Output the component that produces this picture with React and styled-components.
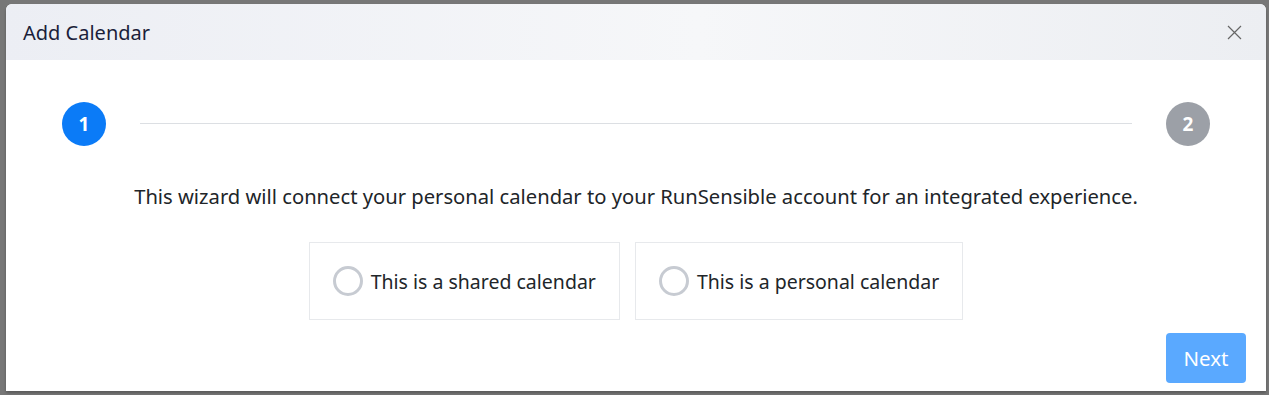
import React from "react";
import styled, { createGlobalStyle } from "styled-components";

const Global = createGlobalStyle`
  html, body { margin: 0; padding: 0; }
  body {
    width: 1269px;
    height: 395px;
    overflow: hidden;
    background: #7a7a7a;
    font-family: "Noto Sans", "Open Sans", sans-serif;
  }
`;

const Backdrop = styled.div`
  width: 1269px;
  height: 395px;
  background: #777777;
  overflow: hidden;
  padding: 4px 3px 0 6px;
  box-sizing: border-box;
`;

const Modal = styled.div`
  width: 1260px;
  height: 387px;
  background: #ffffff;
  border-radius: 6px 6px 0 0;
  overflow: hidden;
  display: flex;
  flex-direction: column;
  box-shadow: 0 2px 3px rgba(0, 0, 0, 0.25);
`;

const Header = styled.div`
  height: 56px;
  flex: none;
  display: flex;
  align-items: center;
  justify-content: space-between;
  padding: 0 24px 0 17px;
  background: linear-gradient(90deg, #eceef4 0%, #f6f7f9 55%, #eceef2 100%);
`;

const Title = styled.h5`
  margin: 0;
  font-size: 20px;
  font-weight: 400;
  color: #1b1e3a;
`;

const Close = styled.button`
  border: none;
  background: none;
  padding: 0;
  width: 16px;
  height: 16px;
  display: flex;
  align-items: center;
  justify-content: center;
  cursor: pointer;
`;

const Body = styled.div`
  flex: 1;
  display: flex;
  flex-direction: column;
  padding: 42px 20px 0 20px;
`;

const Stepper = styled.div`
  display: flex;
  align-items: center;
  margin: 0 36px;
`;

const StepDot = styled.div`
  width: 44px;
  height: 44px;
  border-radius: 50%;
  flex: none;
  background: ${(p) => (p.$active ? "#0b7bf7" : "#9ca0a7")};
  color: #fff;
  font-weight: 700;
  font-size: 19px;
  display: flex;
  align-items: center;
  justify-content: center;
`;

const StepLine = styled.div`
  flex: 1;
  height: 1px;
  background: #dcdfe3;
  margin: 0 34px 1px 34px;
`;

const Intro = styled.p`
  margin: 37px 0 0 0;
  text-align: center;
  font-size: 20.2px;
  line-height: 27px;
  color: #212529;
`;

const Options = styled.div`
  margin-top: 32px;
  display: flex;
  justify-content: center;
  gap: 15px;
`;

const Option = styled.label`
  height: 78px;
  box-sizing: border-box;
  border: 1px solid #e7e9ec;
  display: flex;
  align-items: center;
  gap: 8px;
  padding: 0 23px;
  font-size: 19.5px;
  color: #212529;
  cursor: pointer;
`;

const Radio = styled.span`
  width: 30px;
  height: 30px;
  box-sizing: border-box;
  border-radius: 50%;
  border: 3px solid #c7cbd2;
  background: #fff;
  flex: none;
`;

const Footer = styled.div`
  display: flex;
  justify-content: flex-end;
  margin-top: 13px;
`;

const NextButton = styled.button`
  width: 80px;
  height: 50px;
  border: none;
  border-radius: 4px;
  background: #5aa9ff;
  color: #fff;
  font-family: inherit;
  font-size: 20.5px;
  cursor: default;
`;

export default function App() {
  return (
    <>
      <Global />
      <Backdrop>
        <Modal>
          <Header>
            <Title>Add Calendar</Title>
            <Close aria-label="Close">
              <svg width="15" height="15" viewBox="0 0 15 15">
                <path d="M1 1 L14 14 M14 1 L1 14" stroke="#666" strokeWidth="1.2" fill="none" />
              </svg>
            </Close>
          </Header>
          <Body>
            <Stepper>
              <StepDot $active>1</StepDot>
              <StepLine />
              <StepDot>2</StepDot>
            </Stepper>
            <Intro>
              This wizard will connect your personal calendar to your RunSensible account for an integrated experience.
            </Intro>
            <Options>
              <Option>
                <Radio />
                This is a shared calendar
              </Option>
              <Option>
                <Radio />
                This is a personal calendar
              </Option>
            </Options>
            <Footer>
              <NextButton>Next</NextButton>
            </Footer>
          </Body>
        </Modal>
      </Backdrop>
    </>
  );
}
